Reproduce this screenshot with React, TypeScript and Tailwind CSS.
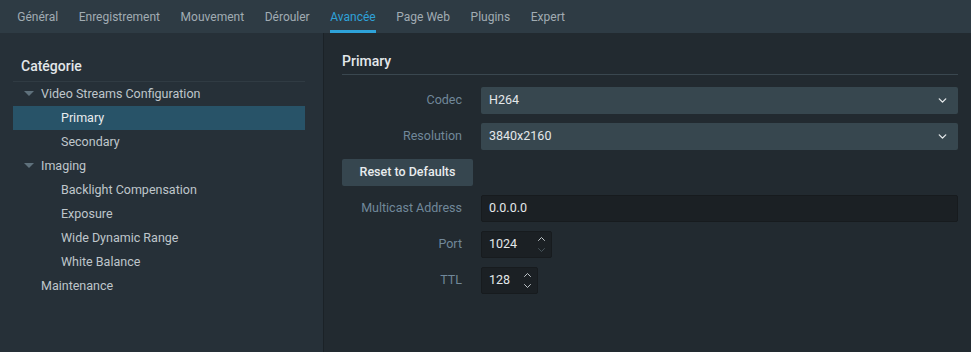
import { ChevronDown, ChevronUp } from 'lucide-react';

const tabs = ['Général', 'Enregistrement', 'Mouvement', 'Dérouler', 'Avancée', 'Page Web', 'Plugins', 'Expert'];

type TreeItem = { label: string; level: number; open?: boolean; active?: boolean };

const tree: TreeItem[] = [
  { label: 'Video Streams Configuration', level: 0, open: true },
  { label: 'Primary', level: 1, active: true },
  { label: 'Secondary', level: 1 },
  { label: 'Imaging', level: 0, open: true },
  { label: 'Backlight Compensation', level: 1 },
  { label: 'Exposure', level: 1 },
  { label: 'Wide Dynamic Range', level: 1 },
  { label: 'White Balance', level: 1 },
  { label: 'Maintenance', level: 0 },
];

function Caret() {
  return (
    <svg width="10" height="6" viewBox="0 0 10 6" className="shrink-0">
      <path d="M0 0 L10 0 L5 5 Z" fill="#5f717c" />
    </svg>
  );
}

function Label({ children }: { children: React.ReactNode }) {
  return <div className="w-[120px] text-right text-[12.5px] text-[#71889a] shrink-0">{children}</div>;
}

function Select({ value }: { value: string }) {
  return (
    <div className="flex-1 h-[27px] bg-[#37474f] rounded-[2px] flex items-center justify-between pl-[8px] pr-[9px] text-[12.5px] text-[#e4e8ea]">
      <span>{value}</span>
      <ChevronDown className="w-[13px] h-[13px] text-[#e4e8ea]" strokeWidth={2.5} />
    </div>
  );
}

function Spin({ value, width }: { value: string; width: string }) {
  return (
    <div className={`${width} h-[27px] bg-[#1b2024] border border-[#171b1e] rounded-[2px] flex items-center justify-between pl-[7px] pr-[3px] text-[12.5px] text-[#e4e8ea]`}>
      <span>{value}</span>
      <div className="flex flex-col items-center">
        <ChevronUp className="w-[13px] h-[12px] text-[#d6dcdf] -mb-[1px]" strokeWidth={1.75} />
        <ChevronDown className={`w-[13px] h-[12px] ${value === '1024' ? 'text-[#4d5a61]' : 'text-[#d6dcdf]'}`} strokeWidth={1.75} />
      </div>
    </div>
  );
}

export default function App() {
  return (
    <div className="w-[971px] h-[352px] flex flex-col overflow-hidden font-['Roboto',sans-serif] bg-[#222a30]">
      {/* Tabs */}
      <div className="h-[33px] bg-[#2e3b44] flex items-stretch pl-[7px] shrink-0">
        {tabs.map((t) => (
          <div key={t} className="px-[10.3px] flex items-stretch text-[12px]">
            <span
              className={`flex items-center border-b-[3px] pt-[3px] ${
                t === 'Avancée' ? 'text-[#2ea2d9] border-[#2ea2d9]' : 'text-[#a1acb3] border-transparent'
              }`}
            >
              {t}
            </span>
          </div>
        ))}
      </div>

      <div className="flex flex-1 min-h-0">
        {/* Category tree */}
        <div className="w-[324px] bg-[#263038] border-r border-[#1b2227] pl-[13px] pr-[18px] shrink-0">
          <div className="mt-[24px] h-[25px] pb-[5px] border-b border-[#303b43] pl-[8px] flex items-center text-[14px] font-medium text-[#e3e7ea]">
            Catégorie
          </div>
          {tree.map((it) => (
            <div
              key={it.label}
              className={`h-[24px] flex items-center text-[12.5px] ${
                it.active ? 'bg-[#285368] text-[#e8ecee]' : 'text-[#bfc6cb]'
              } ${it.level === 0 ? 'pl-[11px]' : 'pl-[48px]'}`}
            >
              {it.level === 0 && (
                <span className="w-[17px] flex items-center">{it.open && <Caret />}</span>
              )}
              {it.label}
            </div>
          ))}
        </div>

        {/* Settings */}
        <div className="flex-1 pl-[18px] pr-[13px]">
          <div className="mt-[18px] h-[20px] flex items-center text-[14px] font-medium text-[#e3e7ea]">Primary</div>
          <div className="mt-[3px] border-b border-[#3a474f]" />

          <div className="mt-[12px] flex flex-col gap-[9px]">
            <div className="flex items-center gap-[19px]">
              <Label>Codec</Label>
              <Select value="H264" />
            </div>
            <div className="flex items-center gap-[19px]">
              <Label>Resolution</Label>
              <Select value="3840x2160" />
            </div>
            <div className="flex">
              <button className="w-[131px] h-[27px] bg-[#36464f] rounded-[2px] text-[12.5px] font-medium text-[#e8ecee]">
                Reset to Defaults
              </button>
            </div>
            <div className="flex items-center gap-[19px]">
              <Label>Multicast Address</Label>
              <div className="flex-1 h-[27px] bg-[#1b2024] border border-[#171b1e] rounded-[2px] flex items-center pl-[7px] text-[12.5px] text-[#e4e8ea]">
                0.0.0.0
              </div>
            </div>
            <div className="flex items-center gap-[19px]">
              <Label>Port</Label>
              <Spin value="1024" width="w-[71px]" />
            </div>
            <div className="flex items-center gap-[19px]">
              <Label>TTL</Label>
              <Spin value="128" width="w-[57px]" />
            </div>
          </div>
        </div>
      </div>
    </div>
  );
}
